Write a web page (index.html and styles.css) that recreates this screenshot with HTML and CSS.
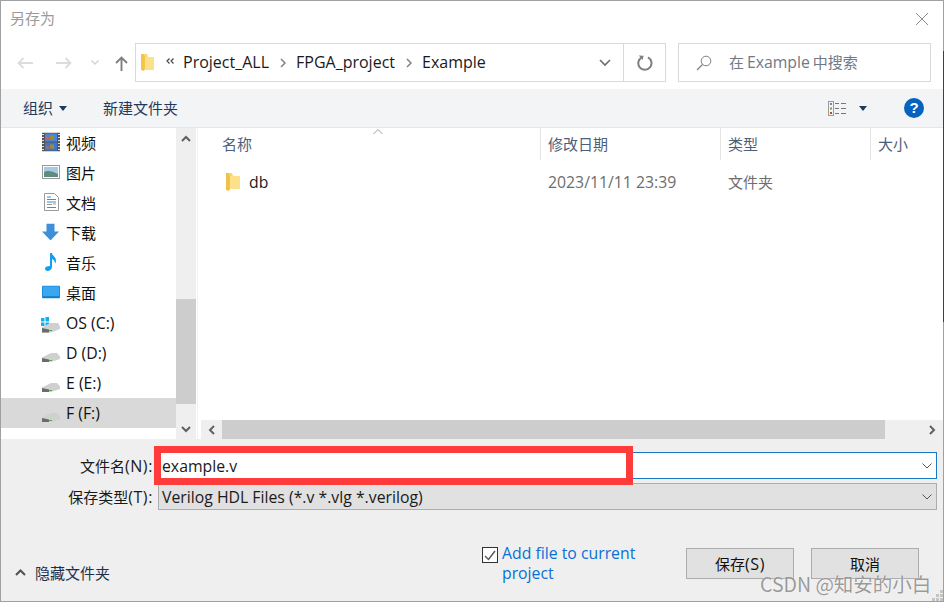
FILE: index.html
```html
<!DOCTYPE html>
<html lang="zh">
<head>
<meta charset="utf-8">
<title>另存为</title>
<link rel="stylesheet" href="styles.css">
</head>
<body>
<div class="dialog">
  <header class="titlebar">
    <span class="title">另存为</span>
    <svg class="close" width="14" height="14" viewBox="0 0 14 14"><path d="M1 1l12 12M13 1L1 13" stroke="#8c8c8c" stroke-width="1" fill="none"/></svg>
  </header>

  <nav class="navbar">
    <div class="navbtns">
      <svg width="16" height="12" viewBox="0 0 16 12"><path d="M1.500 6H16M6.500 1l-5 5 5 5" stroke="#dcdcdc" stroke-width="1.800" fill="none"/></svg>
      <svg class="forward" width="16" height="12" viewBox="0 0 16 12"><path d="M14.500 6H0M9.500 1l5 5-5 5" stroke="#dcdcdc" stroke-width="1.800" fill="none"/></svg>
      <svg class="recent" width="8" height="5" viewBox="0 0 8 5"><path d="M.5.5L4 4 7.5.5" stroke="#d4d4d4" stroke-width="1.400" fill="none"/></svg>
      <svg class="up" width="13" height="15" viewBox="0 0 13 15"><path d="M6.500 15V1.500M1 7l5.500-5.500L12 7" stroke="#808080" stroke-width="1.900" fill="none"/></svg>
    </div>
    <div class="address">
      <svg class="addr-folder" width="13" height="17" viewBox="0 0 13 17"><path d="M0 0h3l1 2v13l-1 2-3-1z" fill="#f4c54b"/><path d="M4 3h9v13H4z" fill="#fde08a"/><path d="M3 0h3l1 3H4z" fill="#fad66b"/></svg>
      <svg class="chev-double" width="8" height="6" viewBox="0 0 8 6"><path d="M3.500.5L1 3l2.500 2.500M7.500.5L5 3l2.500 2.500" stroke="#444" stroke-width="1.200" fill="none"/></svg>
      <span class="crumb">Project_ALL</span>
      <svg class="sep" width="6" height="10" viewBox="0 0 6 10"><path d="M1 1l4 4-4 4" stroke="#808080" stroke-width="1.500" fill="none"/></svg>
      <span class="crumb">FPGA_project</span>
      <svg class="sep" width="6" height="10" viewBox="0 0 6 10"><path d="M1 1l4 4-4 4" stroke="#808080" stroke-width="1.500" fill="none"/></svg>
      <span class="crumb">Example</span>
      <span class="grow"></span>
      <div class="addr-drop"><svg width="12" height="8" viewBox="0 0 12 8"><path d="M1 1l5 5 5-5" stroke="#707070" stroke-width="1.700" fill="none"/></svg></div>
      <div class="addr-refresh"><svg width="16" height="16" viewBox="0 0 16 16"><path d="M5 2.300A6.600 6.600 0 1 0 11 2.400" stroke="#808080" stroke-width="2" fill="none"/><path d="M1.800.6L6.600.8 5.600 5z" fill="#808080"/></svg></div>
    </div>
    <div class="search">
      <svg width="16" height="16" viewBox="0 0 16 16"><circle cx="10" cy="6" r="4.800" stroke="#808080" stroke-width="1" fill="none"/><path d="M6.500 9.500L1 15" stroke="#808080" stroke-width="1.200" fill="none"/></svg>
      <span class="search-text">在 <span class="lat">Example</span> 中搜索</span>
    </div>
  </nav>

  <div class="toolbar">
    <span class="tool">组织</span>
    <span class="caret"></span>
    <span class="tool newfolder">新建文件夹</span>
    <span class="grow"></span>
    <svg class="viewicon" width="18" height="15" viewBox="0 0 18 15"><rect x=".5" y=".5" width="5" height="14" fill="#f3f3f3" stroke="#9a9a9a"/><path d="M2 2h2v2H2z" fill="#6a86a8"/><path d="M2 6.500h2v2H2z" fill="#a58a3a"/><path d="M2 11h2v2H2z" fill="#b84a2a"/><path d="M7 2.500h4M13 2.500h5M7 7.500h4M13 7.500h5M7 12.500h4M13 12.500h5" stroke="#777" stroke-width="1"/></svg>
    <span class="caret viewcaret"></span>
    <svg class="help" width="20" height="20" viewBox="0 0 20 20"><circle cx="10" cy="10" r="10" fill="#0563bd"/><text x="10" y="15" text-anchor="middle" class="helpq">?</text></svg>
  </div>

  <main class="browser">
    <aside class="sidebar">
      <ul class="tree">
        <li><svg class="ic" width="18" height="19" viewBox="0 0 18 19"><rect width="18" height="19" fill="#555"/><path d="M0 2h2M0 5h2M0 8h2M0 11h2M0 14h2M0 17h2M16 2h2M16 5h2M16 8h2M16 11h2M16 14h2M16 17h2" stroke="#ddd" stroke-width="1.200"/><rect x="3" y="1" width="12" height="8" fill="#4a86d8"/><rect x="3" y="10" width="12" height="8" fill="#3a78d0"/><path d="M8 3h4v4H8zM8 12h4v4H8z" fill="#a8882a"/><path d="M4 5h3v2H4zM4 14h3v2H4z" fill="#d8603a"/></svg><span>视频</span></li>
        <li><svg class="ic" width="18" height="14" viewBox="0 0 18 14"><rect x=".5" y=".5" width="17" height="13" fill="#fff" stroke="#9a9a9a"/><rect x="2" y="2" width="14" height="10" fill="#a6cbe6"/><path d="M2 7c4-2 8-1 14 2v3H2z" fill="#5f8c7c"/></svg><span>图片</span></li>
        <li><svg class="ic" width="15" height="18" viewBox="0 0 15 18"><path d="M.5.5h10l4 4v13H.5z" fill="#fff" stroke="#9a9a9a"/><path d="M3 4h4M3 6.500h9M3 9h9M3 14.500h9" stroke="#3b8fd8" stroke-width="1"/><path d="M3 11.500h5M9 11h3" stroke="#9a9a9a" stroke-width="1"/></svg><span>文档</span></li>
        <li><svg class="ic" width="17" height="17" viewBox="0 0 17 17"><path d="M4.500 0h8v8h4.500L8.500 17 0 8h4.500z" fill="#3d8fdc"/></svg><span>下载</span></li>
        <li><svg class="ic" width="12" height="18" viewBox="0 0 12 18"><path d="M5 0h2c0 3 4 3 4 8 0 1-.5 2-1 2.500 0-3-2-4-3-4.500V14c0 2-2 4-4.500 4C1 18 0 17 0 15.500S2 13 5 13z" fill="#12a0ee"/></svg><span>音乐</span></li>
        <li><svg class="ic" width="18" height="13" viewBox="0 0 18 13"><rect width="18" height="13" rx="1" fill="#1a8fdc"/><rect x="1" y="1" width="16" height="10" fill="#3aa8f0"/><path d="M1 11.500h16" stroke="#0b6fb8"/></svg><span>桌面</span></li>
        <li class="drive os"><svg class="ic" width="20" height="16" viewBox="0 0 20 16"><g fill="#11aef0"><path d="M0 1h3.500v3.500H0zM4.500 0H8v4.500H4.500zM0 5.500h3.500V9H0zM4.500 5.500H8V10H4.500z"/></g><path d="M1 10.500L9 6h8l2 3.500v2.500l-9 3.500H1z" fill="#d0d0d0"/><path d="M1 11l7 1.500V15.500H1z" fill="#6b6b6b"/><path d="M8 13.500h3" stroke="#49b23c"/></svg><span class="lat">OS (C:)</span></li>
        <li class="drive"><svg class="ic" width="18" height="9" viewBox="0 0 18 9"><path d="M0 4.500L9 0h6l3 3.500V6L9 9H0z" fill="#d0d0d0"/><path d="M0 5l7 1.500V9H0z" fill="#6b6b6b"/><path d="M7 7.500h3" stroke="#49b23c"/></svg><span class="lat">D (D:)</span></li>
        <li class="drive"><svg class="ic" width="18" height="9" viewBox="0 0 18 9"><path d="M0 4.500L9 0h6l3 3.500V6L9 9H0z" fill="#d0d0d0"/><path d="M0 5l7 1.500V9H0z" fill="#6b6b6b"/><path d="M7 7.500h3" stroke="#49b23c"/></svg><span class="lat">E (E:)</span></li>
        <li class="drive selected"><svg class="ic" width="18" height="9" viewBox="0 0 18 9"><path d="M0 4.500L9 0h6l3 3.500V6L9 9H0z" fill="#d0d0d0"/><path d="M0 5l7 1.500V9H0z" fill="#6b6b6b"/><path d="M7 7.500h3" stroke="#49b23c"/></svg><span class="lat">F (F:)</span></li>
      </ul>
    </aside>
    <div class="vscroll">
      <div class="sb-btn"><svg width="10" height="7" viewBox="0 0 10 7"><path d="M1 6l4-4 4 4" stroke="#606060" stroke-width="2" fill="none"/></svg></div>
      <div class="vtrack"><div class="vthumb"></div></div>
      <div class="sb-btn"><svg width="10" height="7" viewBox="0 0 10 7"><path d="M1 1l4 4 4-4" stroke="#606060" stroke-width="2" fill="none"/></svg></div>
    </div>
    <section class="files">
      <div class="thead">
        <div class="th name">名称<svg class="sort" width="10" height="6" viewBox="0 0 10 6"><path d="M.5 5l4.500-4.500L9.500 5" stroke="#9a9a9a" fill="none"/></svg></div>
        <div class="th">修改日期</div>
        <div class="th">类型</div>
        <div class="th">大小</div>
      </div>
      <div class="trow">
        <div class="td name"><svg width="14" height="18" viewBox="0 0 14 18"><path d="M0 0h3l1 2v14l-1 2-3-1z" fill="#f0c24a"/><path d="M4 3h10v13H4z" fill="#fde08a"/><path d="M3 0h3l1 3H4z" fill="#fad66b"/></svg><span class="lat">db</span></div>
        <div class="td lat">2023/11/11 23:39</div>
        <div class="td">文件夹</div>
        <div class="td"></div>
      </div>
      <div class="grow"></div>
      <div class="hscroll">
        <div class="hbtn"><svg width="7" height="10" viewBox="0 0 7 10"><path d="M6 1L2 5l4 4" stroke="#606060" stroke-width="2" fill="none"/></svg></div>
        <div class="hthumb"></div>
        <div class="hbtn"><svg width="7" height="10" viewBox="0 0 7 10"><path d="M1 1l4 4-4 4" stroke="#606060" stroke-width="2" fill="none"/></svg></div>
      </div>
    </section>
  </main>

  <footer class="panel">
    <div class="form-row first">
      <label class="flabel">文件名<span class="mnem">(N):</span></label>
      <div class="field active"><span class="lat">example.v</span><svg width="10" height="6" viewBox="0 0 10 6"><path d="M.5.500L5 5 9.500.500" stroke="#555" fill="none"/></svg></div>
    </div>
    <div class="form-row">
      <label class="flabel">保存类型<span class="mnem">(T):</span></label>
      <div class="field select"><span class="lat">Verilog HDL Files (*.v *.vlg *.verilog)</span><svg width="10" height="6" viewBox="0 0 10 6"><path d="M.5.500L5 5 9.500.500" stroke="#555" fill="none"/></svg></div>
    </div>
    <div class="actions">
      <div class="hide"><svg width="11" height="7" viewBox="0 0 11 7"><path d="M1 6l4.500-4.500L10 6" stroke="#505050" stroke-width="2" fill="none"/></svg><span>隐藏文件夹</span></div>
      <div class="check">
        <span class="box"><svg width="12" height="11" viewBox="0 0 12 11"><path d="M1 6l3.500 3.500L11 1" stroke="#555" stroke-width="1.400" fill="none"/></svg></span>
        <span class="checktext">Add file to current project</span>
      </div>
      <button class="btn save">保存<span class="mnem">(S)</span></button>
      <button class="btn">取消</button>
    </div>
  </footer>

  <div class="redmark"></div>
  <div class="edge-dark"></div>
  <div class="watermark">CSDN @知安的小白</div>
  <svg class="grip" width="11" height="11" viewBox="0 0 11 11"><path d="M8 0h3v3H8zM4 4h3v3H4zM8 4h3v3H8zM0 8h3v3H0zM4 8h3v3H4zM8 8h3v3H8z" fill="#c4c4c4"/></svg>
</div>
</body>
</html>
```

FILE: styles.css
```css
* { box-sizing: border-box; }
html, body { margin: 0; padding: 0; }
body {
  width: 944px;
  height: 602px;
  overflow: hidden;
  background: #fff;
  font-family: "Open Sans", "Noto Sans CJK SC", sans-serif;
  font-size: 15px;
  color: #1a1a1a;
}
svg { display: block; flex: none; }
.grow { flex: 1; }
.lat { font-size: 15.800px; }
.mnem { font-size: 16px; letter-spacing: .6px; }

.dialog {
  position: relative;
  width: 944px;
  height: 602px;
  display: flex;
  flex-direction: column;
  border: 1px solid #a0a0a0;
  overflow: hidden;
}

.titlebar {
  height: 42px;
  display: flex;
  align-items: flex-start;
  justify-content: space-between;
  padding: 7px 14px 0 9px;
  flex: none;
}
.title { color: #9a9a9a; font-size: 15px; line-height: 20px; }
.close { margin-top: 4px; }

.navbar {
  height: 46px;
  flex: none;
  display: flex;
  align-items: flex-start;
}
.navbtns {
  width: 134px;
  height: 39px;
  display: flex;
  align-items: center;
  padding-left: 16px;
}
.forward { margin-left: 23px; }
.recent { margin-left: 19px; }
.up { margin-left: 16px; margin-top: 1px; }
.address {
  width: 531px;
  height: 39px;
  border: 1.500px solid #d9d9d9;
  display: flex;
  align-items: center;
  padding-left: 5px;
}
.addr-folder { margin-right: 12px; }
.chev-double { margin: 0 9px 3px 0; }
.crumb { color: #1a1a1a; font-size: 16px; line-height: 20px; margin-bottom: 2px; }
.sep { margin: 0 10px 0 11px; }
.addr-drop {
  width: 39px;
  height: 100%;
  display: flex;
  align-items: center;
  justify-content: center;
  padding-left: 2px;
}
.addr-refresh {
  width: 42px;
  height: 100%;
  border-left: 1.500px solid #d9d9d9;
  display: flex;
  align-items: center;
  justify-content: center;
}
.search {
  width: 253px;
  height: 39px;
  margin-left: 12px;
  border: 1.500px solid #d9d9d9;
  display: flex;
  align-items: center;
  padding-left: 17px;
  color: #6f7a86;
  font-size: 15px;
  gap: 17px;
}
.search-text { margin-bottom: 2px; word-spacing: -1px; }

.toolbar {
  height: 39px;
  flex: none;
  background: #f3f4f6;
  border-bottom: 1px solid #e4e6e9;
  display: flex;
  align-items: center;
  padding: 0 19px 0 22px;
}
.tool { color: #1f3a5c; font-size: 15px; line-height: 20px; }
.caret {
  width: 0;
  height: 0;
  margin-left: 6px;
  border-left: 4px solid transparent;
  border-right: 4px solid transparent;
  border-top: 5px solid #1f3a5c;
}
.newfolder { margin-left: 36px; }
.viewicon { margin-right: 13px; }
.viewcaret { margin: 0 37px 0 0; }
.helpq { fill: #fff; font: bold 15px "Liberation Sans", sans-serif; }

.browser {
  flex: 1;
  min-height: 0;
  display: flex;
}
.sidebar {
  width: 175px;
  flex: none;
  background: #fff;
}
.tree { list-style: none; margin: 0; padding: 0; }
.tree li {
  height: 30px;
  display: flex;
  align-items: center;
  position: relative;
  padding: 0 0 2px 65px;
  font-size: 15px;
  color: #111;
}
.tree li.drive { padding-bottom: 0; }
.tree li.selected { background: #d9d9d9; }
.ic { position: absolute; left: 41px; top: calc(50% - 1px); transform: translateY(-50%); }
.drive .ic { top: 15px; transform: none; }
.tree li:nth-child(3) .ic { left: 43px; }
.tree li:nth-child(5) .ic { left: 44px; }
.tree li.os .ic { top: 9px; left: 40px; }

.vscroll {
  width: 20px;
  flex: none;
  background: #efefef;
  display: flex;
  flex-direction: column;
}
.sb-btn {
  height: 20px;
  flex: none;
  display: flex;
  align-items: center;
  justify-content: center;
}
.vtrack { flex: 1; padding-top: 151px; }
.vthumb { height: 105px; background: #cdcdcd; }

.files {
  flex: 1;
  min-width: 0;
  margin-left: 1px;
  border-left: 1px solid #f2f2f2;
  display: flex;
  flex-direction: column;
}
.thead, .trow {
  display: grid;
  grid-template-columns: 342px 180px 150px 1fr;
  flex: none;
}
.thead { height: 32px; }
.th {
  border-left: 1px solid #e5e5e5;
  padding-left: 7px;
  color: #4c607a;
  font-size: 15px;
  line-height: 32px;
}
.th.name { border-left: 0; padding-left: 24px; position: relative; }
.sort { position: absolute; left: 175px; top: 1px; }
.trow { height: 44px; }
.td {
  padding-left: 8px;
  color: #6d6d6d;
  font-size: 15px;
  line-height: 44px;
}
.td.lat { font-size: 15.800px; }
.td.name {
  padding-left: 28px;
  display: flex;
  align-items: center;
  gap: 9px;
  color: #1a1a1a;
}
.hscroll {
  height: 19px;
  flex: none;
  margin-left: 3px;
  background: #efefef;
  display: flex;
}
.hbtn {
  width: 21px;
  flex: none;
  display: flex;
  align-items: center;
  justify-content: center;
}
.hthumb { width: 663px; background: #cdcdcd; }
.hbtn:last-child { margin-left: auto; }

.panel {
  height: 162px;
  flex: none;
  background: #efefef;
  position: relative;
  display: flex;
  flex-direction: column;
  padding-top: 13px;
}
.form-row {
  display: flex;
  align-items: center;
  height: 27px;
  margin-bottom: 4px;
}
.flabel {
  width: 152px;
  text-align: right;
  color: #1a1a1a;
  font-size: 15px;
}
.field {
  width: 779px;
  height: 27px;
  margin-left: 5px;
  display: flex;
  align-items: center;
  justify-content: space-between;
  padding: 0 4px 0 3px;
  font-size: 15px;
  color: #1a1a1a;
}
.active { background: #fff; border: 1px solid #1a78c2; }
.select { background: #e1e1e1; border: 1px solid #adadad; }

.actions {
  margin-top: 33px;
  height: 50px;
  position: relative;
  display: flex;
  align-items: flex-start;
}
.hide {
  display: flex;
  align-items: center;
  gap: 9px;
  padding: 15px 0 0 14px;
  color: #1f2f4a;
  font-size: 15px;
  width: 481px;
}
.check { width: 204px; display: flex; gap: 4px; margin-top: -4px; }
.box {
  width: 16px;
  height: 16px;
  margin-top: 4px;
  border: 1px solid #333;
  background: #fff;
  display: flex;
  align-items: center;
  justify-content: center;
  flex: none;
}
.checktext { color: #0a6fd6; font-size: 15.800px; line-height: 20px; width: 150px; }
.btn {
  width: 108px;
  height: 31px;
  background: #e1e1e1;
  border: 1px solid #adadad;
  font-family: inherit;
  font-size: 15px;
  color: #111;
  padding: 0;
  margin-top: 1px;
}
.save { margin-right: 17px; }

.redmark {
  position: absolute;
  left: 153px;
  top: 445px;
  width: 479px;
  height: 39px;
  border: 7px solid #ff3b3b;
}
.edge-dark {
  position: absolute;
  right: -1px;
  top: 50px;
  width: 1px;
  height: 271px;
  background: #404040;
}
.dialog { overflow: visible; }
.watermark {
  position: absolute;
  left: 759px;
  top: 574px;
  font: 19.500px "Noto Sans CJK SC", sans-serif;
  line-height: 18px;
  color: rgba(120,120,120,.75);
  text-shadow: 0 0 1px #fff;
}
.grip { position: absolute; right: 0; bottom: 0; }
```
